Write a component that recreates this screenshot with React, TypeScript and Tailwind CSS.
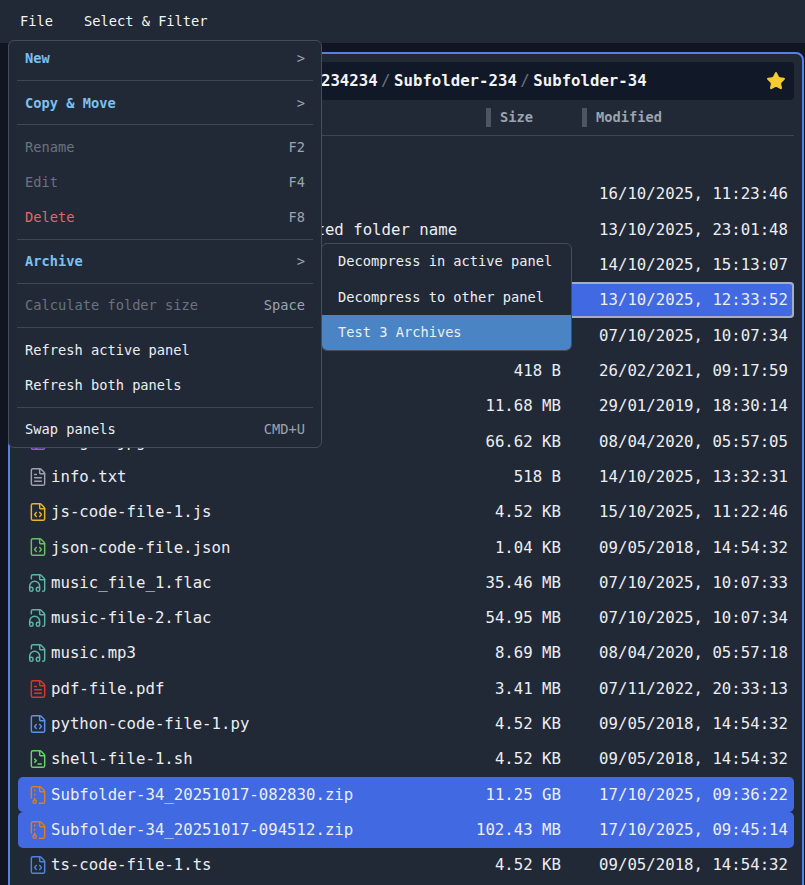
import { FileText, FileCode, FileTerminal, FileArchive, FileHeadphone, FileImage, Folder, Star } from "lucide-react";

type Row = { icon: any; color: string; name: string; size: string; date: string; state?: "cursor" | "selected" };

const rows: Row[] = [
  { icon: Folder, color: "text-[#60a5fa]", name: "..", size: "", date: "" },
  { icon: Folder, color: "text-[#60a5fa]", name: "Documents", size: "", date: "16/10/2025, 11:23:46" },
  { icon: Folder, color: "text-[#60a5fa]", name: "A Folder with a long and nested folder name", size: "", date: "13/10/2025, 23:01:48" },
  { icon: Folder, color: "text-[#60a5fa]", name: "Pictures", size: "", date: "14/10/2025, 15:13:07" },
  { icon: Folder, color: "text-[#60a5fa]", name: "Projects", size: "", date: "13/10/2025, 12:33:52", state: "cursor" },
  { icon: FileHeadphone, color: "text-[#5eb5a6]", name: "audio.flac", size: "35.46 MB", date: "07/10/2025, 10:07:34" },
  { icon: FileText, color: "text-[#9ca3af]", name: "config.cfg", size: "418 B", date: "26/02/2021, 09:17:59" },
  { icon: FileImage, color: "text-[#8b5cf6]", name: "image2.png", size: "11.68 MB", date: "29/01/2019, 18:30:14" },
  { icon: FileImage, color: "text-[#8b5cf6]", name: "image1.jpg", size: "66.62 KB", date: "08/04/2020, 05:57:05" },
  { icon: FileText, color: "text-[#9ca3af]", name: "info.txt", size: "518 B", date: "14/10/2025, 13:32:31" },
  { icon: FileCode, color: "text-[#eab52e]", name: "js-code-file-1.js", size: "4.52 KB", date: "15/10/2025, 11:22:46" },
  { icon: FileCode, color: "text-[#6abf69]", name: "json-code-file.json", size: "1.04 KB", date: "09/05/2018, 14:54:32" },
  { icon: FileHeadphone, color: "text-[#5eb5a6]", name: "music_file_1.flac", size: "35.46 MB", date: "07/10/2025, 10:07:33" },
  { icon: FileHeadphone, color: "text-[#5eb5a6]", name: "music-file-2.flac", size: "54.95 MB", date: "07/10/2025, 10:07:34" },
  { icon: FileHeadphone, color: "text-[#5eb5a6]", name: "music.mp3", size: "8.69 MB", date: "08/04/2020, 05:57:18" },
  { icon: FileText, color: "text-[#d9372c]", name: "pdf-file.pdf", size: "3.41 MB", date: "07/11/2022, 20:33:13" },
  { icon: FileCode, color: "text-[#5c93e6]", name: "python-code-file-1.py", size: "4.52 KB", date: "09/05/2018, 14:54:32" },
  { icon: FileTerminal, color: "text-[#6ccf70]", name: "shell-file-1.sh", size: "4.52 KB", date: "09/05/2018, 14:54:32" },
  { icon: FileArchive, color: "text-[#d97f1f]", name: "Subfolder-34_20251017-082830.zip", size: "11.25 GB", date: "17/10/2025, 09:36:22", state: "selected" },
  { icon: FileArchive, color: "text-[#d97f1f]", name: "Subfolder-34_20251017-094512.zip", size: "102.43 MB", date: "17/10/2025, 09:45:14", state: "selected" },
  { icon: FileCode, color: "text-[#4f83e3]", name: "ts-code-file-1.ts", size: "4.52 KB", date: "09/05/2018, 14:54:32" },
];

function FileRow({ row }: { row: Row }) {
  const Icon = row.icon;
  const stateClass =
    row.state === "cursor"
      ? "bg-[#4169e1] rounded-[4px] ring-2 ring-inset ring-[#a3aebf]"
      : row.state === "selected"
        ? "bg-[#4169e1] rounded-[5px]"
        : "";
  return (
    <div className={`grid grid-cols-[1fr_96px_212px] items-center h-[35.33px] text-[15.7px] text-[#eceef2] ${stateClass}`}>
      <div className="flex items-center gap-[3.5px] pl-[9.5px] min-w-0">
        <Icon className={`w-5 h-5 shrink-0 ${row.color}`} strokeWidth={1.75} />
        <span className="whitespace-nowrap">{row.name}</span>
      </div>
      <div className="text-right pr-[21px] whitespace-nowrap -ml-4">{row.size}</div>
      <div className="text-right pr-[6px] whitespace-nowrap">{row.date}</div>
    </div>
  );
}

function Sep() {
  return <div className="h-px bg-[#3f4757] mx-2 my-[3.9px]" />;
}

function Item({ label, right, tone }: { label: string; right?: string; tone?: "head" | "off" | "danger" | "active" }) {
  const toneClass =
    tone === "head"
      ? "text-[#7cc0f2] font-bold"
      : tone === "off"
        ? "text-[#6b7280]"
        : tone === "danger"
          ? "text-[#dd6b63]"
          : "text-[#eceef2]";
  return (
    <div className={`flex items-center justify-between h-[35.33px] px-4 whitespace-nowrap ${tone === "active" ? "bg-[#4a84c4]" : ""}`}>
      <span className={toneClass}>{label}</span>
      {right && <span className="text-[#9ca3af]">{right}</span>}
    </div>
  );
}

function Slash() {
  return <span className="text-[#6b7280] font-normal">/</span>;
}

export default function App() {
  return (
    <div className="relative h-[885px] overflow-hidden bg-[#111522] font-['DejaVu_Sans_Mono',monospace]">
      <div className="flex items-center h-[43px] bg-[#222936] pl-5 gap-[31px] text-[13.7px] text-[#f3f4f6]">
        <span>File</span>
        <span>Select &amp; Filter</span>
      </div>

      <div className="pl-2 pr-[1px] pt-[9px]">
        <div className="border-2 border-[#5680e6] rounded-[8px] bg-[#222936] px-2 pt-2 h-[900px]">
          <div className="flex items-center justify-between h-[38px] bg-[#111827] rounded-[4px] pr-[8px] pl-[8px]">
            <div className="flex items-center gap-[3.5px] text-[15.7px] font-bold text-[#f3f4f6] whitespace-nowrap">
              <span>User</span>
              <Slash />
              <span>Home</span>
              <Slash />
              <span>Folder-1</span>
              <Slash />
              <span>Subfolder-234234</span>
              <Slash />
              <span>Subfolder-234</span>
              <Slash />
              <span>Subfolder-34</span>
            </div>
            <Star className="w-5 h-5 text-[#f6cc34]" fill="#f6cc34" strokeWidth={1.5} />
          </div>

          <div className="grid grid-cols-[1fr_96px_212px] items-center h-[36px] border-b border-[#3f4757] text-[13.7px] font-bold text-[#9ca3af] mb-[5px]">
            <div className="pl-4">Name</div>
            <div className="flex items-center gap-[9px]">
              <span className="w-[5px] h-[19px] bg-[#4b5563]" />
              <span>Size</span>
            </div>
            <div className="flex items-center gap-[9px]">
              <span className="w-[5px] h-[19px] bg-[#4b5563]" />
              <span>Modified</span>
            </div>
          </div>

          {rows.map((r) => (
            <FileRow key={r.name} row={r} />
          ))}
        </div>
      </div>

      <div className="absolute left-2 top-10 w-[314px] bg-[#222936] border border-[#454d5c] rounded-[6px] text-[13.7px]">
        <Item label="New" right=">" tone="head" />
        <Sep />
        <Item label="Copy & Move" right=">" tone="head" />
        <Sep />
        <Item label="Rename" right="F2" tone="off" />
        <Item label="Edit" right="F4" tone="off" />
        <Item label="Delete" right="F8" tone="danger" />
        <Sep />
        <Item label="Archive" right=">" tone="head" />
        <Sep />
        <Item label="Calculate folder size" right="Space" tone="off" />
        <Sep />
        <Item label="Refresh active panel" />
        <Item label="Refresh both panels" />
        <Sep />
        <Item label="Swap panels" right="CMD+U" />

        <div className="absolute left-[312px] top-[202px] w-[251px] bg-[#222936] border border-[#454d5c] rounded-[6px] overflow-hidden">
          <Item label="Decompress in active panel" />
          <Item label="Decompress to other panel" />
          <Item label="Test 3 Archives" tone="active" />
        </div>
      </div>
    </div>
  );
}
